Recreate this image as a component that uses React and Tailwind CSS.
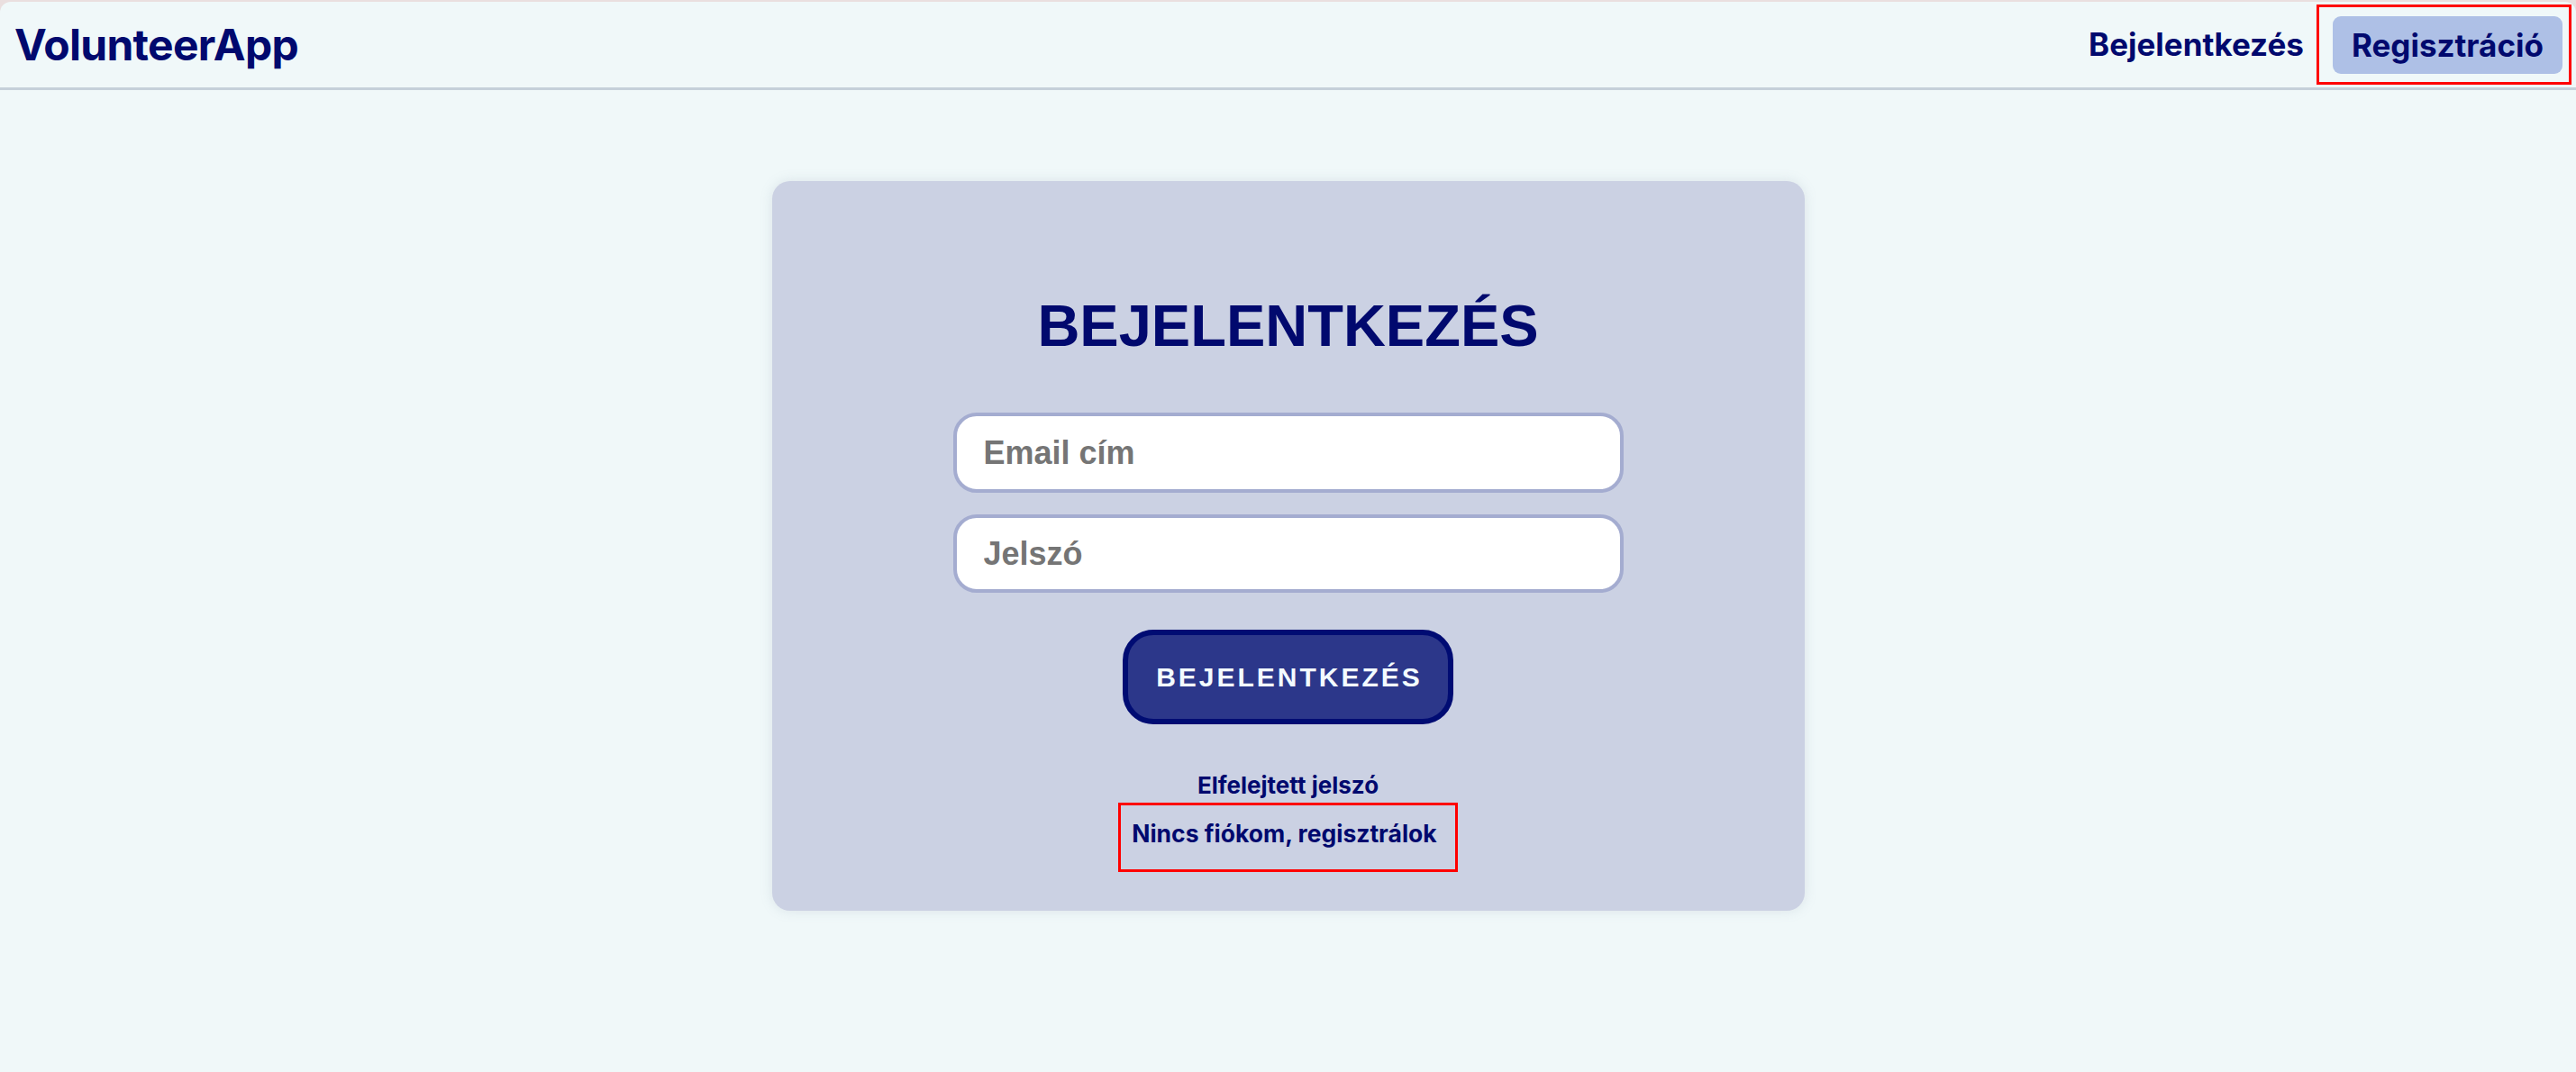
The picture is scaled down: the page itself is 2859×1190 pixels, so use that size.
export default function App() {
  return (
    <div className="min-h-screen bg-[#eadfdf] pt-[2px]">
      <div className="min-h-[1188px] rounded-t-[12px] bg-[#f0f8f9]">
        <header className="flex h-[98px] items-center justify-between border-b-[3px] border-[#c5d0da] pl-[16px] pr-[5px] font-['Inter',sans-serif] text-[#01096e]">
          <a href="#" className="text-[48px] font-bold tracking-[-0.7px]">VolunteerApp</a>
          <nav className="flex items-center">
            <a href="#" className="mr-[14px] text-[35px] font-bold">Bejelentkezés</a>
            <div className="border-[3px] border-[#ff0000] pb-[9px] pl-[15px] pr-[7px] pt-[10px]">
              <a href="#" className="block h-[64px] rounded-[9px] bg-[#aec0e6] px-[21px] text-[35px] font-bold leading-[64px]">
                Regisztráció
              </a>
            </div>
          </nav>
        </header>

        <main className="flex justify-center pt-[101px]">
          <div className="flex h-[810px] w-[1146px] flex-col items-center rounded-[20px] bg-[#cbd1e3] pt-[123px] shadow-[0_0_14px_rgba(120,140,160,0.18)]">
            <h1 className="font-['Liberation_Sans',Arial,sans-serif] text-[65px] font-bold leading-[75px] text-[#01096e]">
              BEJELENTKEZÉS
            </h1>

            <form className="mt-[59px] flex w-[744px] flex-col gap-[24px]" onSubmit={(e) => e.preventDefault()}>
              <input
                type="email"
                placeholder="Email cím"
                className="h-[89px] w-full rounded-[26px] border-4 border-[#a4acd0] bg-white pl-[30px] font-['Liberation_Sans',Arial,sans-serif] text-[36px] font-bold outline-none placeholder:text-[#757575]"
              />
              <input
                type="password"
                placeholder="Jelszó"
                className="h-[87px] w-full rounded-[26px] border-4 border-[#a4acd0] bg-white pl-[30px] font-['Liberation_Sans',Arial,sans-serif] text-[36px] font-bold outline-none placeholder:text-[#757575]"
              />
              <div className="mt-[17px] flex justify-center">
                <button
                  type="submit"
                  className="h-[105px] w-[367px] rounded-[34px] border-[6px] border-[#000c73] bg-[#2c378a] pl-[3px] font-['Liberation_Sans',Arial,sans-serif] text-[30px] font-bold tracking-[3px] text-[#f3fbff]"
                >
                  BEJELENTKEZÉS
                </button>
              </div>
            </form>

            <div className="mt-[53px] flex flex-col items-center font-['Inter',sans-serif] text-[#01096e]">
              <a href="#" className="text-[26px] font-bold leading-[29px]">Elfelejtett jelszó</a>
              <div className="mt-[5px] border-[3px] border-[#ff0000] pb-[24px] pl-[12px] pr-[20px] pt-[16px]">
                <a href="#" className="block text-[26.5px] font-bold leading-[31px]">Nincs fiókom, regisztrálok</a>
              </div>
            </div>
          </div>
        </main>
      </div>
    </div>
  );
}
